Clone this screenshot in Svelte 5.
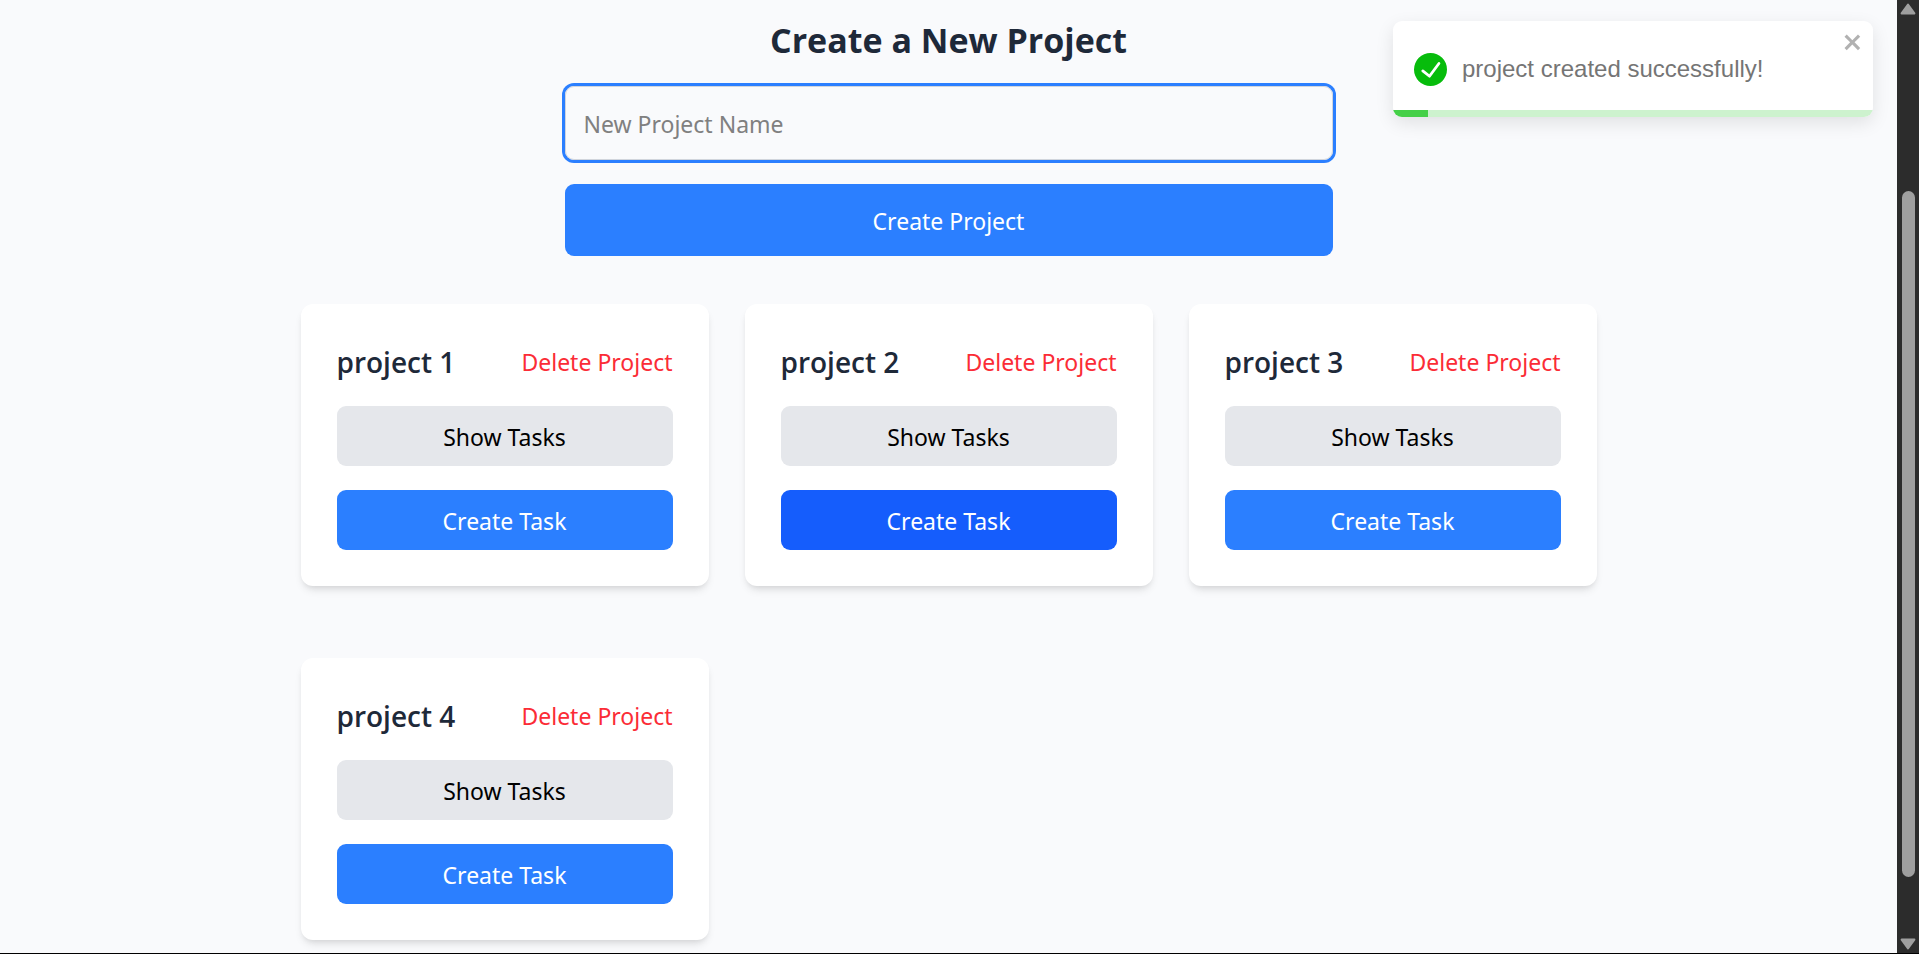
<script>
  let projects = $state([
    { id: 1, name: 'project 1' },
    { id: 2, name: 'project 2', active: true },
    { id: 3, name: 'project 3' },
    { id: 4, name: 'project 4' }
  ]);
  let projectName = $state('');
  let toastOpen = $state(true);
  const progress = 7.3;

  function remove(id) {
    projects = projects.filter((p) => p.id !== id);
  }
</script>

<div class="page">
  <main>
    <form onsubmit={(e) => e.preventDefault()}>
      <h1>Create a New Project</h1>
      <input type="text" aria-label="New Project Name" placeholder="New Project Name" bind:value={projectName} />
      <button class="btn primary large" type="submit">Create Project</button>
    </form>

    <section class="projects">
      {#each projects as project (project.id)}
        <article class="card">
          <header>
            <h2>{project.name}</h2>
            <button class="delete" type="button" onclick={() => remove(project.id)}>Delete Project</button>
          </header>
          <button class="btn muted" type="button">Show Tasks</button>
          <button class="btn primary" class:active={project.active} type="button">Create Task</button>
        </article>
      {/each}
    </section>
  </main>

  <div class="scrollbar" aria-hidden="true">
    <svg class="arrow" viewBox="0 0 16 12"><path d="M8 1.6 14.4 10.4H1.6Z" /></svg>
    <div class="track"><div class="thumb"></div></div>
    <svg class="arrow" viewBox="0 0 16 12"><path d="M8 10.4 1.6 1.6H14.4Z" /></svg>
  </div>

  {#if toastOpen}
    <div class="toast" role="alert">
      <div class="message">
        <svg class="check" viewBox="0 0 24 24"><path d="M12 0a12 12 0 1012 12A12.014 12.014 0 0012 0zm6.927 8.2l-6.845 9.289a1.011 1.011 0 01-1.43.188l-4.888-3.908a1 1 0 111.25-1.562l4.076 3.261 6.227-8.451a1 1 0 111.61 1.183z" /></svg>
        <span>project created successfully!</span>
      </div>
      <button class="close" type="button" aria-label="close" onclick={() => (toastOpen = false)}>
        <svg viewBox="0 0 14 16"><path d="M7.71 8.23l3.75 3.75-1.48 1.48-3.75-3.75-3.75 3.75L1 11.98l3.75-3.75L1 4.48 2.48 3l3.75 3.75L9.98 3l1.48 1.48-3.75 3.75z" /></svg>
      </button>
      <div class="progress"><div class="bar" style="width: {progress}%"></div></div>
    </div>
  {/if}
</div>

<style>
  :global(body) {
    background: #f9fafb;
  }
  .page,
  .page * {
    box-sizing: border-box;
  }
  .page {
    display: flex;
    position: relative;
    min-height: 100vh;
    border-bottom: 1px solid #000;
    background: #f9fafc;
    font-family: "Segoe UI", "Noto Sans", "Open Sans", sans-serif;
    font-size: 23px;
    line-height: 36px;
  }
  button,
  input {
    font: inherit;
  }
  button {
    padding: 0;
    border: 0;
    background: none;
    cursor: pointer;
  }
  h1,
  h2 {
    margin: 0;
    color: #1e2939;
  }
  main {
    flex: 1;
    min-width: 0;
    padding: 20px 24px 13px;
  }
  form {
    display: flex;
    flex-direction: column;
    gap: 24px;
    max-width: 768px;
    margin: 0 auto 48px;
  }
  h1 {
    font-family: "Segoe UI", "Open Sans", "Noto Sans", sans-serif;
    font-size: 34px;
    font-weight: 700;
    line-height: 40px;
    padding-bottom: 2px;
    text-align: center;
  }
  input {
    width: 100%;
    height: 74px;
    padding: 2px 18px 0;
    border: 1px solid #d1d5dc;
    border-radius: 9px;
    outline: 0;
    box-shadow: 0 0 0 3px #2b7fff;
    background: transparent;
    color: #1e2939;
  }
  input::placeholder {
    color: #808080;
    opacity: 1;
  }
  .btn {
    display: block;
    width: 100%;
    padding: 13px 12px 11px;
    border-radius: 9px;
    text-align: center;
  }
  .large {
    padding: 19px 18px 17px;
  }
  .primary {
    background: #2b7fff;
    color: #fff;
  }
  .primary.active {
    background: #155dfc;
  }
  .muted {
    background: #e5e7eb;
    color: #000;
  }
  .projects {
    display: grid;
    grid-template-columns: repeat(3, minmax(0, 1fr));
    gap: 72px 36px;
    max-width: 1296px;
    margin: 0 auto;
  }
  .card {
    display: flex;
    flex-direction: column;
    gap: 24px;
    padding: 36px;
    border-radius: 12px;
    background: #fff;
    box-shadow: 0 6px 9px -2px rgba(0, 0, 0, 0.1), 0 3px 6px -3px rgba(0, 0, 0, 0.1);
  }
  header {
    display: flex;
    align-items: center;
    justify-content: space-between;
    padding-top: 2px;
  }
  h2 {
    font-family: "Segoe UI", "Open Sans", "Noto Sans", sans-serif;
    font-size: 28px;
    font-weight: 600;
    line-height: 40px;
  }
  .delete {
    color: #fb2c36;
  }
  .scrollbar {
    display: flex;
    flex-direction: column;
    align-items: center;
    width: 22px;
    padding: 3px 0;
    background: #2c2c2c;
  }
  .arrow {
    width: 16px;
    height: 12px;
    fill: #9f9f9f;
    stroke: #9f9f9f;
    stroke-width: 2;
    stroke-linejoin: round;
  }
  .track {
    display: flex;
    flex: 1;
    flex-direction: column;
    padding: 176px 0 61px;
  }
  .thumb {
    flex: 1;
    width: 13px;
    border-radius: 7px;
    background: #9f9f9f;
  }
  .toast {
    position: absolute;
    top: 21px;
    right: 46px;
    width: 480px;
    max-width: 90%;
    overflow: hidden;
    border-radius: 9px;
    background: #fff;
    box-shadow: 0 6px 18px rgba(0, 0, 0, 0.1);
    color: #757575;
    font-family: Arial, "Liberation Sans", sans-serif;
    font-size: 24px;
  }
  .message {
    display: flex;
    align-items: center;
    gap: 15px;
    padding: 30px 21px 23px;
  }
  .check {
    width: 33px;
    height: 33px;
    fill: #07bc0c;
  }
  .close {
    position: absolute;
    top: 9px;
    right: 9px;
    display: flex;
    opacity: 0.3;
  }
  .close svg {
    width: 21px;
    height: 24px;
  }
  .progress {
    height: 7px;
    background: #cdf2ce;
  }
  .bar {
    height: 100%;
    background: #45d048;
  }
</style>
